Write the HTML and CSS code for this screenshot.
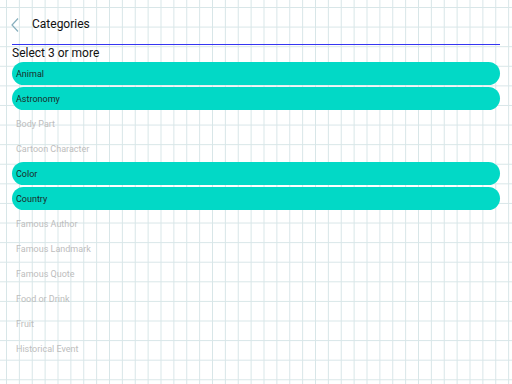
FILE: index.html
```html
<!DOCTYPE html>
<html lang="en">
<head>
    <meta charset="UTF-8">
    <title>Categories</title>
    <link rel="stylesheet" href="styles.css">
</head>
<body>
    <div class="container">
        <header class="topbar">
            <svg class="back" width="8" height="14" viewBox="0 0 8 14">
                <polyline points="7,0.5 1,7 7,13.5" fill="none" stroke="#86aebd" stroke-width="1.2"/>
            </svg>
            <h1>Categories</h1>
        </header>

        <p class="hint">Select 3 or more</p>

        <ul class="categories">
            <li class="selected">Animal</li>
            <li class="selected">Astronomy</li>
            <li>Body Part</li>
            <li>Cartoon Character</li>
            <li class="selected">Color</li>
            <li class="selected">Country</li>
            <li>Famous Author</li>
            <li>Famous Landmark</li>
            <li>Famous Quote</li>
            <li>Food or Drink</li>
            <li>Fruit</li>
            <li>Historical Event</li>
        </ul>
    </div>
</body>
</html>
```

FILE: styles.css
```css
html, body {
    height: 100%;
}

body {
    margin: 0;
    font-family: Roboto, "Liberation Sans", sans-serif;
    background-color: #fff;
    background-image:
        linear-gradient(to right, #d8e6e8 1px, transparent 1px),
        linear-gradient(to bottom, #d8e6e8 1px, transparent 1px);
    background-size: 12.88px 19.6px;
    background-position: 6px 7px;
    overflow: hidden;
}

.container {
    padding: 0 12px;
}

.topbar {
    display: flex;
    align-items: center;
    height: 44px;
    border-bottom: 1px solid #3535f2;
}

.back {
    margin-left: -1px;
    margin-top: 5px;
}

.topbar h1 {
    margin: 0 0 0 13px;
    padding-top: 4px;
    font-size: 12px;
    font-weight: normal;
    color: #111;
}

.hint {
    margin: 0;
    height: 17px;
    line-height: 17px;
    font-size: 12px;
    color: #111;
}

.categories {
    list-style: none;
    margin: 0;
    padding: 0;
}

.categories li {
    height: 23px;
    line-height: 24px;
    margin-bottom: 2px;
    padding-left: 4px;
    border-radius: 12px;
    font-size: 9px;
    color: #bdbdbd;
}

.categories li.selected {
    background: #02d9c6;
    color: #1b2b2a;
}
```
